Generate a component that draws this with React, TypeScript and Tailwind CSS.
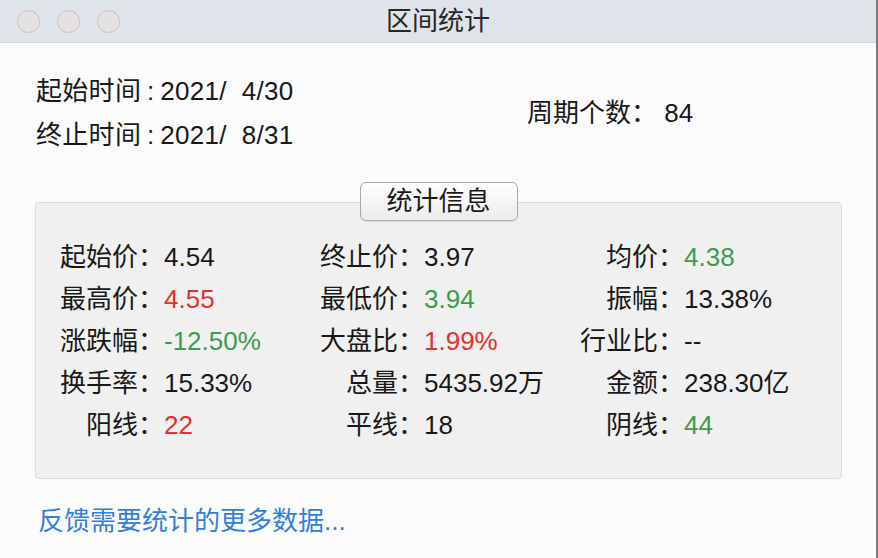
import React from 'react';

type Cell = { label: string; value: string; tone?: 'red' | 'green' };

const ROWS: Cell[][] = [
  [
    { label: '起始价：', value: '4.54' },
    { label: '终止价：', value: '3.97' },
    { label: '均价：', value: '4.38', tone: 'green' },
  ],
  [
    { label: '最高价：', value: '4.55', tone: 'red' },
    { label: '最低价：', value: '3.94', tone: 'green' },
    { label: '振幅：', value: '13.38%' },
  ],
  [
    { label: '涨跌幅：', value: '-12.50%', tone: 'green' },
    { label: '大盘比：', value: '1.99%', tone: 'red' },
    { label: '行业比：', value: '--' },
  ],
  [
    { label: '换手率：', value: '15.33%' },
    { label: '总量：', value: '5435.92万' },
    { label: '金额：', value: '238.30亿' },
  ],
  [
    { label: '阳线：', value: '22', tone: 'red' },
    { label: '平线：', value: '18' },
    { label: '阴线：', value: '44', tone: 'green' },
  ],
];

function toneClass(tone?: 'red' | 'green') {
  if (tone === 'red') return 'text-[#e2302f]';
  if (tone === 'green') return 'text-[#3a9c4c]';
  return 'text-[#181818]';
}

function Light() {
  return <div className="w-[23px] h-[23px] rounded-full bg-[#e5e1e2] border border-[#c6c0c1]" />;
}

export default function App() {
  return (
    <div
      className="w-[878px] h-[558px] overflow-hidden bg-[#fbfbfb] border-r-2 border-[#7a7a7a] text-[#181818]"
      style={{ fontFamily: '"Liberation Sans", "Noto Sans CJK SC", sans-serif' }}
    >
      {/* Title bar */}
      <div className="relative h-[43px] bg-[#dfe4ea] border-b border-[#d3d8de] flex items-center">
        <div className="flex items-center gap-[17px] pl-[17px]">
          <Light />
          <Light />
          <Light />
        </div>
        <div className="absolute inset-0 flex items-center justify-center text-[26px] text-[#262626]">
          区间统计
        </div>
      </div>

      {/* Period */}
      <div className="flex items-center pt-[26px] pl-[36px] text-[26px]">
        <div className="w-[491px] tracking-[0.3px]">
          <div className="h-[44px] flex items-center">
            起始时间<span className="inline-block w-[19px] text-center">:</span>2021/&nbsp;&nbsp;4/30
          </div>
          <div className="h-[44px] flex items-center">
            终止时间<span className="inline-block w-[19px] text-center">:</span>2021/&nbsp;&nbsp;8/31
          </div>
        </div>
        <div>周期个数： 84</div>
      </div>

      {/* Statistics group */}
      <div className="relative mt-[45px] ml-[35px] w-[807px] h-[277px] bg-[#f0f0f0] border border-[#dcdcdc] rounded-[4px]">
        <div className="absolute left-1/2 -translate-x-1/2 -top-[21px] w-[158px] h-[39px] flex items-center justify-center rounded-[6px] border border-[#a9a9a9] bg-gradient-to-b from-[#fefefe] to-[#ececec] shadow-[0_1px_1px_rgba(0,0,0,0.08)] text-[26px] text-[#1a1a1a]">
          统计信息
        </div>
        <div className="pt-[33px] text-[26px]">
          {ROWS.map((row, i) => (
            <div key={i} className="grid grid-cols-[260px_260px_260px] h-[42px]">
              {row.map((c) => (
                <div key={c.label} className="flex items-center">
                  <span className="w-[128px] text-right">{c.label}</span>
                  <span className={toneClass(c.tone)}>{c.value}</span>
                </div>
              ))}
            </div>
          ))}
        </div>
      </div>

      {/* Feedback link */}
      <div className="mt-[25px] ml-[38px] h-[34px] flex items-center text-[26px] text-[#2f80da]">
        反馈需要统计的更多数据...
      </div>
    </div>
  );
}
